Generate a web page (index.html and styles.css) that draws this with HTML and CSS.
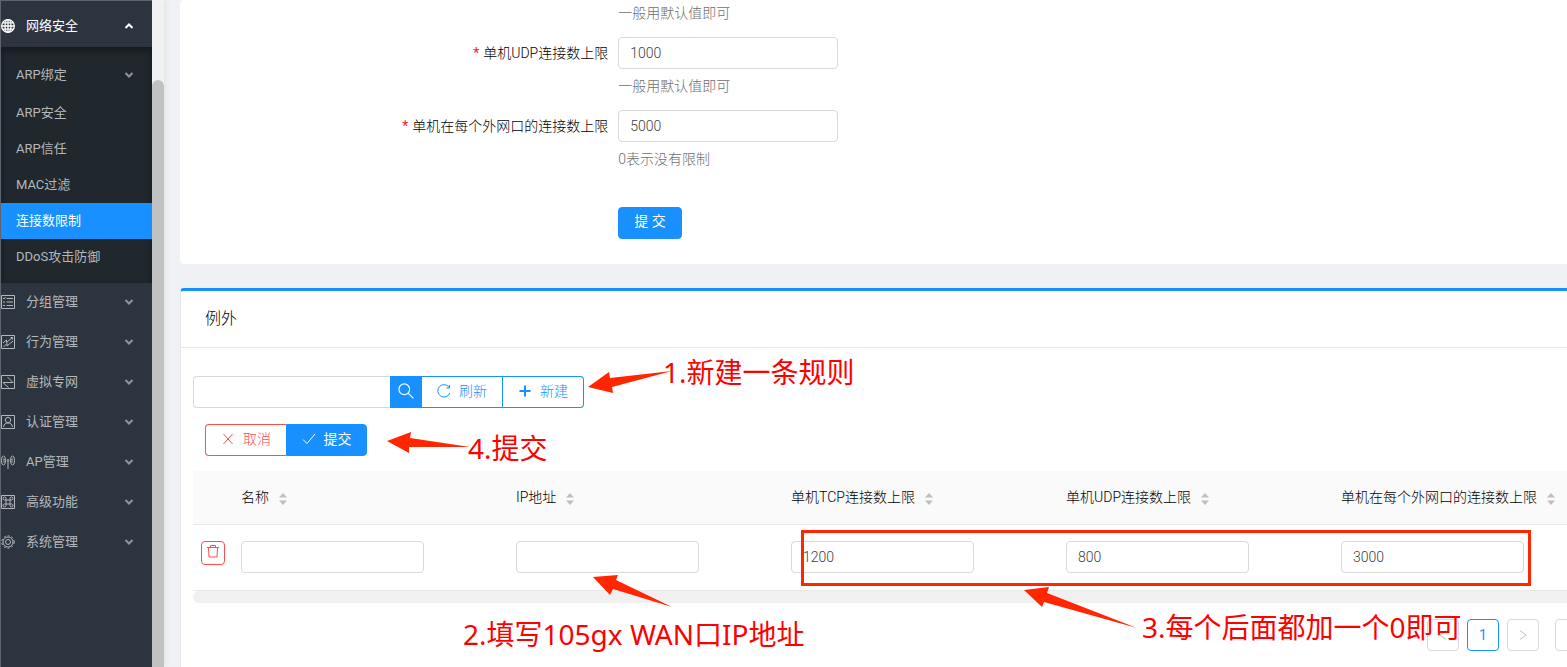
FILE: index.html
```html
<!DOCTYPE html>
<html lang="zh-CN">
<head>
<meta charset="utf-8">
<title>连接数限制</title>
<link rel="stylesheet" href="styles.css">
</head>
<body>
<svg class="defs" aria-hidden="true">
  <symbol id="down" viewBox="0 0 10 10"><path d="M1.500 3 5 6.500 8.500 3" fill="none" stroke="currentColor" stroke-width="2"/></symbol>
  <symbol id="sort" viewBox="0 0 8 14"><path d="M4 1 8 5.500H0zM4 13 8 8.500H0z" fill="currentColor"/></symbol>
</svg>
<nav class="sidebar">
  <a class="item open" href="#"><svg class="ico strong" viewBox="0 0 14 14"><circle cx="7" cy="7" r="6.300"/><ellipse cx="7" cy="7" rx="3" ry="6.300"/><path d="M7 .7v12.600M.7 7h12.600M1.800 3.800h10.400M1.800 10.200h10.400"/></svg><span>网络安全</span><svg class="arrow up"><use href="#down"/></svg></a>
  <div class="submenu">
    <a class="sub parent" href="#"><span>ARP绑定</span><svg class="arrow"><use href="#down"/></svg></a>
    <a class="sub" href="#">ARP安全</a>
    <a class="sub" href="#">ARP信任</a>
    <a class="sub" href="#">MAC过滤</a>
    <a class="sub active" href="#">连接数限制</a>
    <a class="sub" href="#">DDoS攻击防御</a>
  </div>
  <a class="item" href="#"><svg class="ico" viewBox="0 0 14 14"><path d="M.5.5h13v13H.5zM5.500 3.500H12M5.500 7H12M5.500 10.500H12M2 3l1 1 1.500-2M2 7h2M2 10.500h2"/></svg><span>分组管理</span><svg class="arrow"><use href="#down"/></svg></a>
  <a class="item" href="#"><svg class="ico" viewBox="0 0 14 14"><path d="M.5.500h13v13H.5zM2 8l3.500-3v2.500L11.500 2.500M2.500 12l3.500-3.500V11L12 6M9.500 2.500h2v2"/></svg><span>行为管理</span><svg class="arrow"><use href="#down"/></svg></a>
  <a class="item" href="#"><svg class="ico" viewBox="0 0 14 14"><path d="M.5.500h13v13H.5zM6.500 2 12 7.500H2L7.500 12.500"/></svg><span>虚拟专网</span><svg class="arrow"><use href="#down"/></svg></a>
  <a class="item" href="#"><svg class="ico" viewBox="0 0 14 14"><path d="M.5.500h13v13H.5zM2.500 12c.5-3 2-4 4.500-4s4 1 4.500 4"/><circle cx="7" cy="5" r="2.700"/></svg><span>认证管理</span><svg class="arrow"><use href="#down"/></svg></a>
  <a class="item" href="#"><svg class="ico" viewBox="0 0 14 14"><path d="M7 6v8"/><circle cx="7" cy="5.500" r="1"/><ellipse cx="2.500" cy="5.500" rx="2" ry="4.500"/><ellipse cx="11.500" cy="5.500" rx="2" ry="4.500"/><path d="M3 3.500v4M11 3.500v4"/></svg><span>AP管理</span><svg class="arrow"><use href="#down"/></svg></a>
  <a class="item" href="#"><svg class="ico" viewBox="0 0 14 14"><path d="M.5.500h13v13H.5z"/><path d="M5 5H3.500A1.500 1.500 0 1 1 5 3.500v7A1.500 1.500 0 1 1 3.500 9h7A1.500 1.500 0 1 1 9 10.500v-7A1.500 1.500 0 1 1 10.500 5z"/></svg><span>高级功能</span><svg class="arrow"><use href="#down"/></svg></a>
  <a class="item" href="#"><svg class="ico" viewBox="0 0 14 14"><circle cx="7" cy="7" r="5"/><circle cx="7" cy="7" r="2.500"/><circle class="teeth" cx="7" cy="7" r="6.200"/></svg><span>系统管理</span><svg class="arrow"><use href="#down"/></svg></a>
</nav>
<div class="scrollbar"><div class="thumb"></div></div>
<main class="content">
  <form class="card form">
    <p class="help">一般用默认值即可</p>
    <label for="udp"><b>*</b>单机UDP连接数上限</label><input id="udp" value="1000">
    <p class="help">一般用默认值即可</p>
    <label for="wan"><b>*</b>单机在每个外网口的连接数上限</label><input id="wan" value="5000">
    <p class="help">0表示没有限制</p>
    <button class="btn primary submit" type="button">提 交</button>
  </form>
  <section class="card exceptions">
    <h2>例外</h2>
    <div class="body">
      <div class="group">
        <input class="search" aria-label="搜索">
        <button class="btn primary find" type="button" aria-label="搜索"><svg viewBox="0 0 14 14"><circle cx="5.500" cy="5.500" r="4.700"/><path d="m9 9 4.500 4.500"/></svg></button>
        <button class="btn outline" type="button"><svg viewBox="0 0 14 14"><path d="M12 3.200A6.200 6.200 0 1 0 12.800 9M12.500 1v3H9.500"/></svg>刷新</button>
        <button class="btn outline last" type="button"><svg viewBox="0 0 14 14"><path class="bold" d="M7 1.500v11M1.500 7h11"/></svg>新建</button>
      </div>
      <div class="group actions">
        <button class="btn danger" type="button"><svg viewBox="0 0 14 14"><path d="m2.500 2 9 10M11.500 2l-9 10"/></svg>取消</button>
        <button class="btn primary last" type="button"><svg viewBox="0 0 14 14"><path d="m1 7.500 4 4L13 2"/></svg>提交</button>
      </div>
      <div class="tablewrap">
        <table>
          <thead><tr><th class="tool"></th><th>名称<svg class="sort"><use href="#sort"/></svg></th><th>IP地址<svg class="sort"><use href="#sort"/></svg></th><th>单机TCP连接数上限<svg class="sort"><use href="#sort"/></svg></th><th>单机UDP连接数上限<svg class="sort"><use href="#sort"/></svg></th><th class="wide">单机在每个外网口的连接数上限<svg class="sort"><use href="#sort"/></svg></th></tr></thead>
          <tbody><tr><td><button class="btn trash" type="button" aria-label="删除"><svg viewBox="0 0 14 14"><path d="M1 3.500h12M4.500 3.500v-2h5v2M2.500 3.500l.5 9.500h8l.5-9.500"/></svg></button></td><td><input aria-label="名称"></td><td><input aria-label="IP地址"></td><td><input aria-label="单机TCP连接数上限" value="1200"></td><td><input aria-label="单机UDP连接数上限" value="800"></td><td><input aria-label="单机在每个外网口的连接数上限" value="3000"></td></tr></tbody>
        </table>
        <div class="hbar"></div>
      </div>
      <div class="pager">
        <button type="button" aria-label="上一页"><svg viewBox="0 0 12 12"><path d="M9 1.500 3 6l6 4.500"/></svg></button>
        <button class="current" type="button">1</button>
        <button type="button" aria-label="下一页"><svg viewBox="0 0 12 12"><path d="m3 1.500 6 4.500-6 4.500"/></svg></button>
        <select aria-label="每页条数"><option></option></select>
      </div>
    </div>
  </section>
</main>
<div class="notes">
  <svg class="arrows" aria-hidden="true"><path d="M588 387 609 372 610 378 672 371 612 387 613 393zM387 441 411 432 410 438 470 447 409 447 409 453zM593 577 618 575 616 580 672 607 613 589 610 595zM1024 590 1049 587 1047 593 1137 628 1044 602 1042 607z"/></svg>
  <div class="frame"></div>
  <span class="note n1">1.新建一条规则</span>
  <span class="note n2">2.填写105gx WAN口IP地址</span>
  <span class="note n3">3.每个后面都加一个0即可</span>
  <span class="note n4">4.提交</span>
</div>
</body>
</html>
```
FILE: styles.css
```css
* { box-sizing: border-box; }
body {
  margin: 0; display: flex; height: 100vh; overflow: hidden; position: relative;
  background: #f0f1f5; color: #000;
  font: 300 14px/20px Roboto, "Noto Sans CJK SC", sans-serif;
}
input, button, select { font: inherit; margin: 0; }
a { text-decoration: none; color: inherit; }
svg { fill: none; stroke: currentColor; flex: none; }
.defs { position: absolute; width: 0; height: 0; }

.sidebar {
  flex: none; width: 152px; background: #2c343f; color: #b4b8bc; position: relative; z-index: 1;
  border-left: 1px solid #5d646c; border-top: 1px solid #5d646c; font-size: 13px; font-weight: 400;
}
.item { display: flex; align-items: center; height: 40px; padding: 0 18px 2px 0; }
.item.open { height: 46px; padding-top: 6px; color: #fff; }
.ico { width: 14px; height: 14px; margin-right: 11px; }
.strong { stroke-width: 1.3; }
.arrow { width: 10px; height: 10px; margin-left: auto; color: #90959a; }
.arrow.up { transform: rotate(180deg); color: #fff; }
.teeth { stroke-dasharray: 2 2; }
.submenu { background: #20272d; padding: 8px 0; box-shadow: inset 0 3px 6px #14191d; }
.sub { display: flex; align-items: center; height: 36px; padding: 0 18px 0 15px; }
.sub.parent { height: 40px; }
.sub.active { background: #1890ff; color: #fff; }

.scrollbar { flex: none; width: 12px; padding-top: 80px; background: #f1f1f1; box-shadow: 0 0 6px #d8dade; }
.thumb { height: 100%; background: #c1c1c1; border-radius: 6px 6px 0 0; }

.content { flex: none; width: calc(100% - 64px); padding-left: 16px; display: flex; flex-direction: column; gap: 24px; }
.card { background: #fff; border-radius: 4px 0 0 4px; }
.form {
  display: grid; grid-template-columns: 29% 1fr; column-gap: 7px;
  justify-items: start; align-items: center; padding: 3px 0 25px;
}
.form label { justify-self: end; margin: 0 3px 7px 0; }
.form b { color: #f5222d; font-weight: 400; margin-right: 4px; }
.help { grid-column: 2; margin: 0 0 14px; color: #6e6e6e; }
input { height: 32px; border: 1px solid #d9d9d9; border-radius: 4px; padding: 0 11px; background: #fff; color: #404040; outline: 0; }
.form input { width: 220px; margin-bottom: 7px; }
.submit { grid-column: 2; margin-top: 24px; }

.btn {
  height: 32px; padding: 0 15px 4px; border: 1px solid; border-radius: 4px; background: #fff;
  display: inline-flex; align-items: center; justify-content: center; gap: 8px; white-space: nowrap;
}
.btn svg { width: 14px; height: 14px; }
.bold { stroke-width: 2; }
.primary { background: #1890ff; border-color: #1890ff; color: #fff; font-weight: 400; }
.outline { color: #1890ff; border-left-width: 0; }
.danger { color: #ff4d4f; border-right-width: 0; }

.exceptions { flex: none; border-left: 1px solid #e8e8e8; border-top: 3px solid #1890ff; }
h2 { margin: 0; padding: 16px 24px; border-bottom: 1px solid #e8e8e8; font-size: 16px; line-height: 24px; font-weight: 300; }
.body { padding: 28px 12px 24px; }
.group { display: flex; }
.group .btn { width: 81px; padding: 0 0 2px; border-radius: 0; }
.group .find { width: 32px; }
.group .find svg { width: 16px; height: 16px; }
.group .last { border-radius: 0 4px 4px 0; }
.group .danger { border-radius: 4px 0 0 4px; }
.search { width: 197px; border-right: 0; border-radius: 4px 0 0 4px; }
.actions { padding: 16px 12px 15px; }

table { width: 100%; table-layout: fixed; border-collapse: separate; border-spacing: 0; }
th, td { width: 275px; padding: 16px 8px; text-align: left; font-weight: 300; border-bottom: 1px solid #e8e8e8; }
th { background: #fafafa; height: 54px; padding-bottom: 17px; line-height: 19px; }
th.tool { width: 40px; }
th.wide { width: auto; }
td { height: 66px; vertical-align: top; }
td input { width: 183px; display: block; }
.sort { width: 8px; height: 14px; margin-left: 10px; color: #bfbfbf; vertical-align: -4px; stroke: none; }
.trash { display: flex; width: 24px; height: 24px; padding: 0 0 4px; color: #ff4d4f; }
.hbar { height: 12px; background: #f0f0f0; border-radius: 6px; }

.pager { display: flex; justify-content: flex-end; gap: 8px; padding-top: 16px; }
.pager button, .pager select {
  width: 32px; height: 32px; padding: 0; border: 1px solid #d9d9d9; border-radius: 4px; background: #fff; color: #bfbfbf;
  display: flex; align-items: center; justify-content: center;
}
.pager svg { width: 12px; height: 12px; }
.pager .current { color: #1890ff; border-color: #1890ff; font-weight: 400; }
.pager select { width: 100px; margin-left: 8px; }

.notes { position: absolute; inset: 0; pointer-events: none; color: #f00; font: 28px/36px "Noto Sans", "Noto Sans CJK SC", sans-serif; }
.arrows { position: absolute; width: 100%; height: 100%; fill: #ff2600; stroke: none; }
.frame { position: absolute; left: 801px; top: 530px; width: 730px; height: 56px; border: 3px solid #ff2600; }
.note { position: absolute; white-space: nowrap; }
.n1 { left: 663px; top: 354px; }
.n2 { left: 463px; top: 616px; }
.n3 { left: 1142px; top: 609px; }
.n4 { left: 468px; top: 430px; }
```
